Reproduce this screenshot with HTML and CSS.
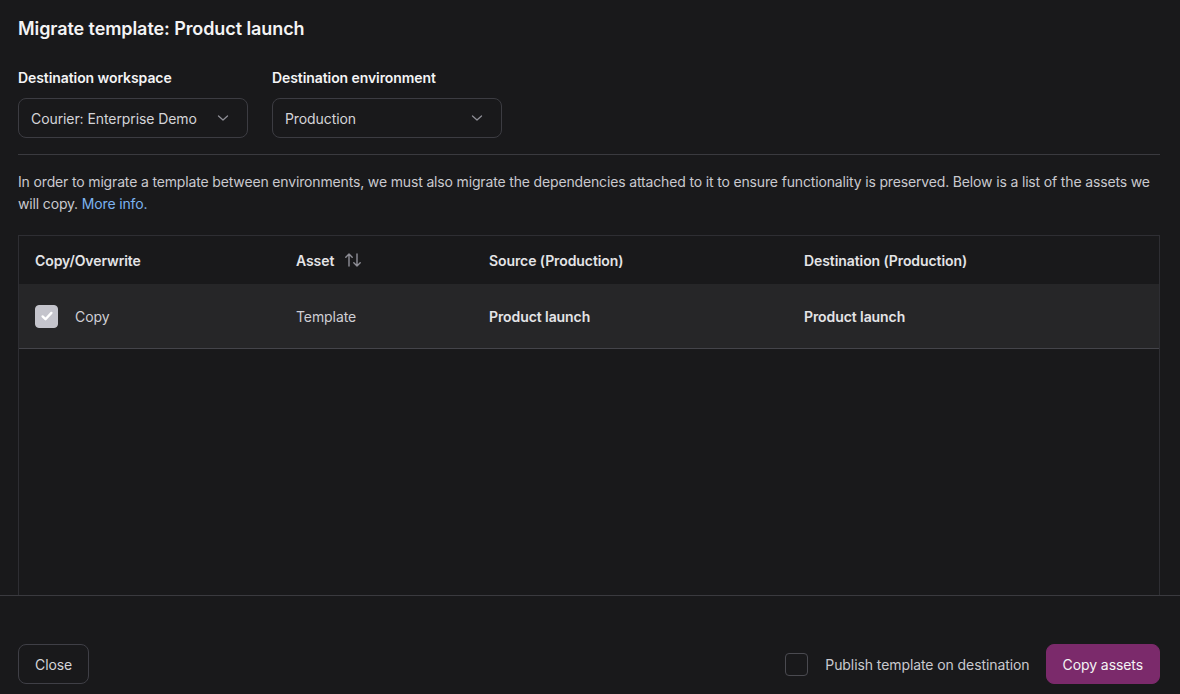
FILE: index.html
```html
<!DOCTYPE html>
<html lang="en">
<head>
    <meta charset="UTF-8">
    <meta name="viewport" content="width=device-width, initial-scale=1.0">
    <title>Migrate template</title>
    <link rel="stylesheet" href="styles.css">
</head>
<body>

    <div class="dialog">
        <div class="content">
            <h1>Migrate template: Product launch</h1>

            <div class="fields">
                <div class="field">
                    <label>Destination workspace</label>
                    <div class="select">
                        <span>Courier: Enterprise Demo</span>
                        <svg width="12" height="8" viewBox="0 0 12 8"><path d="M1.5 2l4.5 4 4.5-4" fill="none" stroke="#8e8e96" stroke-width="1.3" stroke-linecap="round" stroke-linejoin="round"/></svg>
                    </div>
                </div>
                <div class="field">
                    <label>Destination environment</label>
                    <div class="select">
                        <span>Production</span>
                        <svg width="12" height="8" viewBox="0 0 12 8"><path d="M1.5 2l4.5 4 4.5-4" fill="none" stroke="#8e8e96" stroke-width="1.3" stroke-linecap="round" stroke-linejoin="round"/></svg>
                    </div>
                </div>
            </div>

            <hr class="divider">

            <p class="intro">In order to migrate a template between environments, we must also migrate the dependencies attached to it to ensure functionality is preserved. Below is a list of the assets we will copy. <a href="#">More info.</a></p>

            <div class="table-wrap">
                <table>
                    <thead>
                        <tr>
                            <th class="col-copy">Copy/Overwrite</th>
                            <th class="col-asset">
                                <span class="sort">Asset
                                    <svg width="18" height="16" viewBox="0 0 18 16"><path d="M5 14V2M1.8 5.2L5 2l3.2 3.2" fill="none" stroke="#8e8e96" stroke-width="1.4" stroke-linecap="round" stroke-linejoin="round"/><path d="M13 2v12M9.8 10.8L13 14l3.2-3.2" fill="none" stroke="#8e8e96" stroke-width="1.4" stroke-linecap="round" stroke-linejoin="round"/></svg>
                                </span>
                            </th>
                            <th class="col-source">Source (Production)</th>
                            <th>Destination (Production)</th>
                        </tr>
                    </thead>
                    <tbody>
                        <tr>
                            <td>
                                <span class="check-cell">
                                    <span class="checkbox checked">
                                        <svg width="16" height="16" viewBox="0 0 16 16"><path d="M3.6 8.4l2.9 2.8L12.4 4.9" fill="none" stroke="#fff" stroke-width="2.4" stroke-linecap="round" stroke-linejoin="round"/></svg>
                                    </span>
                                    Copy
                                </span>
                            </td>
                            <td class="muted">Template</td>
                            <td class="strong">Product launch</td>
                            <td class="strong">Product launch</td>
                        </tr>
                    </tbody>
                </table>
            </div>
        </div>

        <div class="footer">
            <button class="btn">Close</button>
            <div class="actions">
                <label class="publish">
                    <span class="checkbox"></span>
                    Publish template on destination
                </label>
                <button class="btn primary">Copy assets</button>
            </div>
        </div>
    </div>

</body>
</html>
```

FILE: styles.css
```css
html, body {
    height: 100%;
}
body {
    margin: 0;
    background-color: #19191b;
    color: #d4d4d8;
    font-family: Inter, "Noto Sans", sans-serif;
    font-size: 14px;
    letter-spacing: -0.006em;
    overflow: hidden;
}
.dialog {
    display: flex;
    flex-direction: column;
    height: 100vh;
}
.content {
    flex: 1;
    display: flex;
    flex-direction: column;
    padding: 17px 20px 0 18px;
    min-height: 0;
}
h1 {
    margin: 0;
    font-size: 18px;
    line-height: 24px;
    font-weight: 600;
    color: #f4f4f5;
}
.fields {
    display: flex;
    gap: 24px;
    margin-top: 27px;
}
.field label {
    display: block;
    font-weight: 600;
    line-height: 20px;
    color: #f4f4f5;
    margin-bottom: 10px;
}
.select {
    width: 230px;
    height: 40px;
    box-sizing: border-box;
    border: 1px solid #3c3c42;
    border-radius: 8px;
    display: flex;
    align-items: center;
    justify-content: space-between;
    padding: 0 18px 0 12px;
    color: #d4d4d8;
}
.divider {
    border: 0;
    border-top: 1px solid #3a3a3f;
    margin: 16px 0 0;
}
.intro {
    margin: 16px 0 20px;
    line-height: 22px;
    letter-spacing: -0.011em;
    color: #c9c9cf;
}
.intro a {
    color: #7cb3f0;
    text-decoration: none;
}
.table-wrap {
    flex: 1;
    border: 1px solid #2e2e33;
    border-bottom: 0;
    min-height: 0;
}
table {
    width: 100%;
    border-collapse: collapse;
}
th {
    text-align: left;
    font-weight: 600;
    height: 48px;
    padding: 0 16px;
    color: #e4e4e7;
}
.col-copy {
    width: 229px;
}
.col-asset {
    width: 161px;
}
.col-source {
    width: 283px;
}
.sort {
    display: inline-flex;
    align-items: center;
    gap: 10px;
}
td {
    height: 64px;
    padding: 0 16px;
    background-color: #262628;
    border-bottom: 1px solid #44444a;
}
td.muted {
    color: #cfcfd5;
}
td.strong {
    font-weight: 600;
    color: #e4e4e7;
}
.check-cell {
    display: inline-flex;
    align-items: center;
    gap: 17px;
    color: #cfcfd5;
}
.checkbox {
    width: 23px;
    height: 23px;
    box-sizing: border-box;
    border: 1px solid #4a4a50;
    border-radius: 4px;
    display: inline-flex;
    align-items: center;
    justify-content: center;
}
.checkbox.checked {
    background-color: #c4c4cc;
    border-color: #c4c4cc;
}
.footer {
    border-top: 1px solid #3a3a3f;
    display: flex;
    justify-content: space-between;
    align-items: center;
    padding: 48px 20px 10px 18px;
}
.actions {
    display: flex;
    align-items: center;
    gap: 16px;
}
.publish {
    display: flex;
    align-items: center;
    gap: 17px;
    color: #c9c9cf;
}
.btn {
    height: 40px;
    padding: 0 16px;
    border-radius: 8px;
    border: 1px solid #3f3f46;
    background-color: #19191b;
    color: #d4d4d8;
    font-family: inherit;
    font-size: 14px;
    letter-spacing: inherit;
    cursor: pointer;
}
.btn.primary {
    background-color: #7b2a6b;
    border-color: #7b2a6b;
    color: #f4f4f5;
}
```
